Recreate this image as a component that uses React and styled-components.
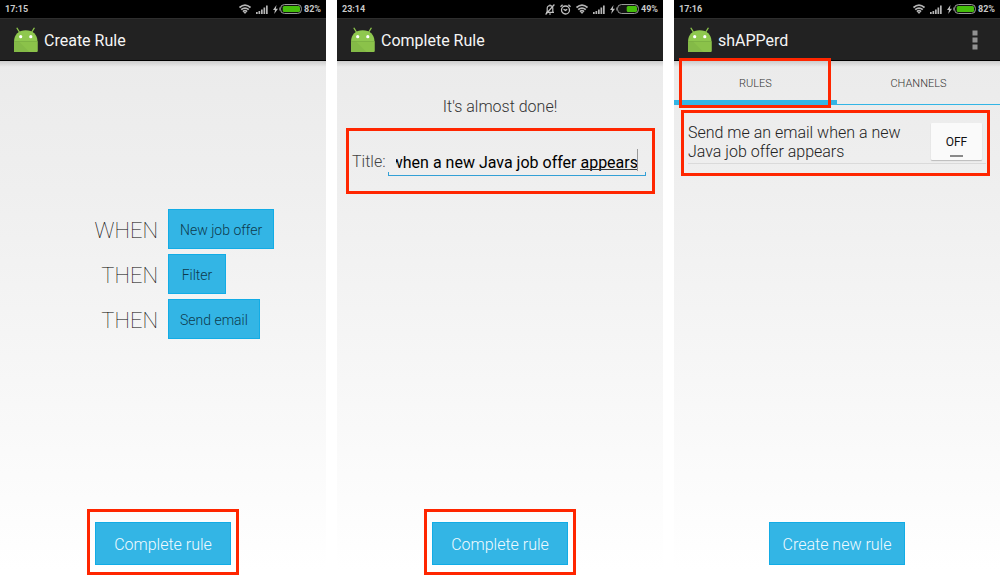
import React, { useLayoutEffect, useRef } from "react";
import styled, { createGlobalStyle } from "styled-components";

const GlobalStyle = createGlobalStyle`
  * { box-sizing: border-box; }
  body {
    margin: 0;
    background: #fff;
    font-family: Roboto, "Liberation Sans", sans-serif;
  }
  button, input { font-family: inherit; }
`;

const Gallery = styled.main`
  display: grid;
  grid-template-columns: repeat(3, minmax(0, 1fr));
  gap: 11px;
  min-height: 100vh;
`;

const Phone = styled.section`
  display: flex;
  flex-direction: column;
`;

const StatusBar = styled.div`
  display: flex;
  align-items: center;
  gap: 5px;
  height: 18px;
  padding: 0 5px;
  background: #000;
  color: #c9c9c9;
  font-size: 9px;
  font-weight: 700;
  line-height: 18px;
`;

const Clock = styled.time`
  flex: 1;
`;

const Power = styled.span`
  display: flex;
  align-items: center;
  gap: 1px;
`;

const ActionBar = styled.header`
  display: flex;
  align-items: center;
  height: 43px;
  padding: 0 18px 0 13px;
  gap: 5px;
  background: #222;
  border-top: 1px solid #2e2e2e;
  border-bottom: 1px solid #000;
`;

const AppTitle = styled.h1`
  flex: 1;
  margin: 0;
  padding-top: 2px;
  color: #f5f5f5;
  font-size: 16px;
  font-weight: 400;
  line-height: 24px;
`;

const MenuButton = styled.button`
  display: flex;
  padding: 0 4px;
  border: 0;
  background: none;
`;

const Screen = styled.div`
  flex: 1;
  display: flex;
  flex-direction: column;
  padding-bottom: 5px;
  background:
    linear-gradient(rgba(0, 0, 0, 0.13), rgba(0, 0, 0, 0)) top / 100% 6px no-repeat,
    linear-gradient(#ebebeb, #efefef 25%, #ffffff 98%);
`;

const Steps = styled.div`
  display: grid;
  grid-template-columns: 1fr 1fr;
  gap: 5px 10px;
  margin-top: 148px;
  align-items: center;
`;

const StepLabel = styled.span`
  padding-top: 3px;
  color: #000;
  font-size: 22px;
  font-weight: 250;
  line-height: 37px;
  text-align: right;
`;

const StepButton = styled.button`
  justify-self: start;
  height: 40px;
  padding: 1px 11px 0;
  min-width: 58px;
  border: 1px solid #12ace6;
  background: #33b5e5;
  color: #0e3a4d;
  font-size: 14px;
  font-weight: 300;
`;

const Footer = styled.footer`
  display: flex;
  justify-content: center;
  margin-top: auto;
`;

const Highlight = styled.div`
  border: 3px solid ${(p) => (p.$on ? "#ff2600" : "transparent")};
  padding: 10px 5px 7px;
`;

const PrimaryButton = styled.button`
  width: 136px;
  height: 43px;
  padding: 1px 0 0;
  border: 1px solid #12ace6;
  background: #33b5e5;
  color: #f0faff;
  font-size: 16px;
  font-weight: 300;
`;

const Message = styled.p`
  margin: 35px 0 11px;
  color: #333;
  font-size: 16px;
  font-weight: 300;
  line-height: 21px;
  text-align: center;
`;

const TitleForm = styled.div`
  display: flex;
  align-items: flex-start;
  height: 66px;
  margin: 0 8px 0 9px;
  padding: 18px 6px 0 3px;
  border: 3px solid #ff2600;
`;

const TitleLabel = styled.label`
  flex: none;
  width: 36px;
  color: #444;
  font-size: 16px;
  font-weight: 300;
  line-height: 26px;
`;

const Field = styled.div`
  position: relative;
  flex: 1;
  min-width: 0;
  height: 27px;
  padding: 0 8px;
  border-bottom: 1px solid #33a0d6;

  &::before {
    content: "";
    position: absolute;
    inset: auto 0 0;
    height: 3px;
    border: solid #33a0d6;
    border-width: 0 1px;
  }
`;

const TitleInput = styled.input`
  display: block;
  width: 100%;
  height: 26px;
  padding: 0;
  border: 0;
  outline: 0;
  background: none;
  color: #000;
  font-size: 16px;
  text-align: right;
`;

const Composing = styled.span`
  position: absolute;
  right: 8px;
  top: 0;
  width: 58px;
  height: 21px;
  border-bottom: 1px solid #333;
  pointer-events: none;
`;

const Caret = styled.span`
  position: absolute;
  right: 8px;
  top: 0;
  width: 1px;
  height: 22px;
  background: #999;
`;

const Tabs = styled.nav`
  display: grid;
  grid-template-columns: 1fr 1fr;
  height: 44px;
`;

const Tab = styled.button`
  position: relative;
  border: 0;
  border-bottom: ${(p) => (p.$active ? 5 : 1)}px solid #33b5e5;
  background: none;
  color: #333;
  font-size: 11px;
  font-weight: 300;
  line-height: 14px;
  padding: ${(p) => (p.$active ? 6 : 2)}px 0 0;

  & + &::before {
    content: "";
    position: absolute;
    left: 0;
    top: 8px;
    bottom: 7px;
    width: 1px;
    background: #d8d8d8;
  }
`;

const TabHighlight = styled.span`
  position: absolute;
  inset: -3px 6px -8px 5px;
  border: 3px solid #ff2600;
  z-index: 1;
`;

const RuleCard = styled.div`
  height: 66px;
  margin: 5px 10px 0 7px;
  padding: 10px 1px 0 4px;
  border: 3px solid #ff2600;
`;

const RuleRow = styled.div`
  display: flex;
  justify-content: space-between;
  height: 41px;
  padding-right: 4px;
  border-bottom: 1px solid #dadada;
`;

const RuleText = styled.label`
  flex: 1;
  max-width: 230px;
  color: #222;
  font-size: 16px;
  font-weight: 300;
  line-height: 19px;
`;

const Toggle = styled.button`
  display: flex;
  flex-direction: column;
  align-items: center;
  width: 51px;
  height: 37px;
  padding: 11px 0 0;
  border: 0;
  border-radius: 1px;
  background: #fafafa;
  box-shadow: 0 1px 1px #bbb;
  color: #111;
  font-size: 12px;
  line-height: 16px;

  &::after {
    content: "";
    width: 13px;
    height: 2px;
    margin-top: 5px;
    background: #8a8a8a;
  }
`;

const Wifi = () => (
  <svg width="12" height="10" viewBox="0 0 12 10" fill="none" stroke="#b5b5b5" strokeWidth="1.7" aria-hidden="true">
    <path d="M.5 3.5Q6-1.3 11.5 3.5M2.2 5.7Q6 2.4 9.8 5.7M3.9 7.6Q6 5.8 8.1 7.6" />
    <path d="M4.4 8h3.2L6 9.9z" fill="#b5b5b5" stroke="none" />
  </svg>
);

const Signal = () => (
  <svg width="12" height="9" viewBox="0 0 12 9" fill="#b5b5b5" aria-hidden="true">
    <path d="M0 7h1.7v2H0zM2.5 6h1.7v3H2.5zM5 4.5h1.7V9H5zM7.5 2.5h1.7V9H7.5zM10 .5h1.7V9H10z" />
  </svg>
);

const Bolt = () => (
  <svg width="5" height="9" viewBox="0 0 5 9" fill="#c0c0c0" aria-hidden="true">
    <path d="M3.5 0 0 5h2L1.2 9 5 3.7H2.8z" />
  </svg>
);

const Battery = ({ level }) => (
  <svg width="24" height="10" viewBox="0 0 24 10" aria-hidden="true">
    <rect x="1.5" y=".5" width="21" height="9" rx="4" fill="#111" stroke="#999" />
    <path d="M.8 3.5v3" stroke="#999" />
    <rect x={21 - 0.21 * level} y="2" width={0.21 * level} height="6" rx="1.5" fill="#45bd0b" />
  </svg>
);

const Mute = () => (
  <svg width="10" height="11" viewBox="0 0 10 11" fill="none" stroke="#c0c0c0" strokeWidth="1.2" aria-hidden="true">
    <path d="M1 8.4h8M2.2 8V4.2Q2.2 1.7 5 1.7t2.8 2.5V8M5 .5v1M4 10h2M9.4.5.6 10.5" />
  </svg>
);

const Alarm = () => (
  <svg width="11" height="11" viewBox="0 0 11 11" fill="none" stroke="#c0c0c0" strokeWidth="1.3" aria-hidden="true">
    <circle cx="5.5" cy="6" r="4" />
    <path d="M.5 2.7 2.6.7M10.5 2.7 8.4.7M3.5 5.2l2 1.2 1.7-1.2" />
  </svg>
);

const Android = () => (
  <svg width="26" height="26" viewBox="0 0 26 26" aria-hidden="true">
    <path d="M4 1.2 6.4 5M21.2 1.2 18.8 5" stroke="#8bc34a" strokeWidth="1.3" strokeLinecap="round" />
    <path d="M1 14.5C1.200 7.500 5.500 3.200 12.750 3.200S24.300 7.500 24.500 14.500V24q0 1-1 1H2q-1 0-1-1z" fill="#8fc84f" />
    <path d="M1 14.5h23.5V24q0 1-1 1H2q-1 0-1-1z" fill="#8bc24a" />
    <path d="M1 14.5h5L16.5 25H2q-1 0-1-1z" fill="#84ba47" />
    <path d="M1 14.5h23.5" stroke="#79ab40" strokeWidth=".7" />
    <circle cx="7.7" cy="9.7" r="1.6" fill="#fff" />
    <circle cx="17.8" cy="9.7" r="1.6" fill="#fff" />
  </svg>
);

const Dots = () => (
  <svg width="6" height="20" viewBox="0 0 6 20" fill="#929292" aria-hidden="true">
    <path d="M.5.5h5v5h-5zM.5 7.5h5v5h-5zM.5 14.5h5v5h-5z" />
  </svg>
);

function Device({ time, level, silent, title, menu, children }) {
  return (
    <Phone>
      <StatusBar>
        <Clock>{time}</Clock>
        {silent && <Mute />}
        {silent && <Alarm />}
        <Wifi />
        <Signal />
        <Power>
          <Bolt />
          <Battery level={level} />
          <span>{level}%</span>
        </Power>
      </StatusBar>
      <ActionBar>
        <Android />
        <AppTitle>{title}</AppTitle>
        {menu && (
          <MenuButton aria-label="More options">
            <Dots />
          </MenuButton>
        )}
      </ActionBar>
      <Screen>{children}</Screen>
    </Phone>
  );
}

function BottomAction({ highlighted, children }) {
  return (
    <Footer>
      <Highlight $on={highlighted}>
        <PrimaryButton>{children}</PrimaryButton>
      </Highlight>
    </Footer>
  );
}

const steps = [
  { label: "WHEN", action: "New job offer" },
  { label: "THEN", action: "Filter" },
  { label: "THEN", action: "Send email" },
];

export default function App() {
  const titleRef = useRef(null);

  // Keep the end of the long title in view, where the caret is.
  useLayoutEffect(() => {
    const scrollToEnd = () => {
      const input = titleRef.current;
      if (input) input.scrollLeft = input.scrollWidth;
    };
    scrollToEnd();
    document.fonts?.ready.then(scrollToEnd);
  }, []);

  return (
    <>
      <GlobalStyle />
      <Gallery>
        <Device time="17:15" level={82} title="Create Rule">
          <Steps>
            {steps.map(({ label, action }) => (
              <React.Fragment key={action}>
                <StepLabel>{label}</StepLabel>
                <StepButton>{action}</StepButton>
              </React.Fragment>
            ))}
          </Steps>
          <BottomAction highlighted>Complete rule</BottomAction>
        </Device>

        <Device time="23:14" level={49} silent title="Complete Rule">
          <Message>It's almost done!</Message>
          <TitleForm>
            <TitleLabel htmlFor="rule-title">Title:</TitleLabel>
            <Field>
              <TitleInput
                id="rule-title"
                ref={titleRef}
                spellCheck={false}
                defaultValue="Send me an email when a new Java job offer appears"
              />
              <Composing />
              <Caret />
            </Field>
          </TitleForm>
          <BottomAction highlighted>Complete rule</BottomAction>
        </Device>

        <Device time="17:16" level={82} title="shAPPerd" menu>
          <Tabs>
            <Tab $active>
              RULES
              <TabHighlight />
            </Tab>
            <Tab>CHANNELS</Tab>
          </Tabs>
          <RuleCard>
            <RuleRow>
              <RuleText htmlFor="rule-toggle">Send me an email when a new Java job offer appears</RuleText>
              <Toggle id="rule-toggle">OFF</Toggle>
            </RuleRow>
          </RuleCard>
          <BottomAction>Create new rule</BottomAction>
        </Device>
      </Gallery>
    </>
  );
}
